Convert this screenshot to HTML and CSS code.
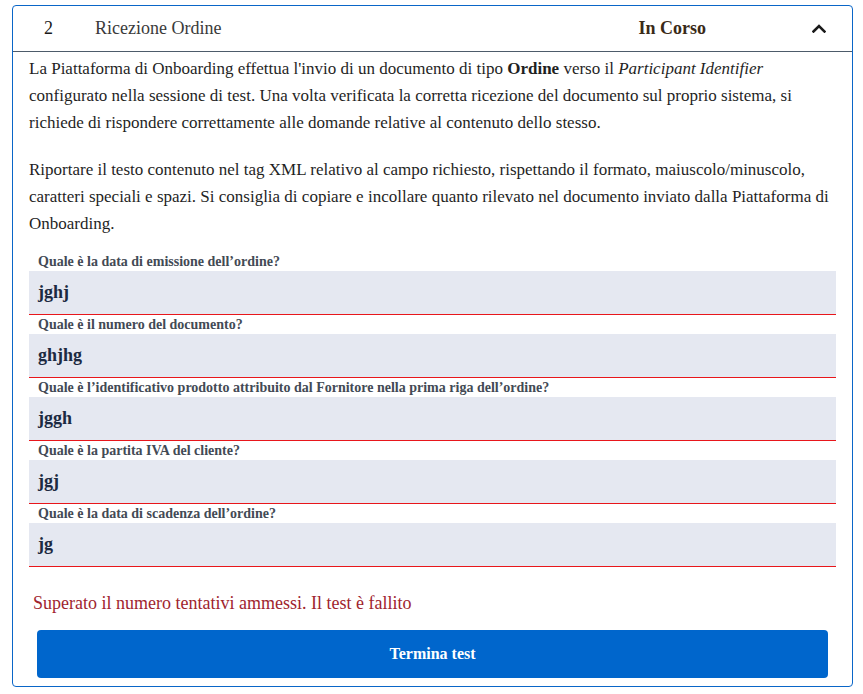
FILE: index.html
```html
<!DOCTYPE html>
<html lang="it">
<head>
<meta charset="utf-8">
<link rel="stylesheet" href="styles.css">
</head>
<body>
<div class="page">
  <section class="card">
    <header class="card-head">
      <span class="step">2</span>
      <span class="title">Ricezione Ordine</span>
      <span class="status">In Corso</span>
      <span class="chevron">
        <svg width="14" height="9" viewBox="0 0 14 9"><path d="M1.5 7.5 L7 2 L12.5 7.5" fill="none" stroke="#1a1a1a" stroke-width="2.6" stroke-linecap="square"/></svg>
      </span>
    </header>
    <div class="card-body">
      <p class="text">La Piattaforma di Onboarding effettua l'invio di un documento di tipo <b>Ordine</b> verso il <i>Participant Identifier</i> configurato nella sessione di test. Una volta verificata la corretta ricezione del documento sul proprio sistema, si richiede di rispondere correttamente alle domande relative al contenuto dello stesso.</p>
      <p class="text text-last">Riportare il testo contenuto nel tag XML relativo al campo richiesto, rispettando il formato, maiuscolo/minuscolo, caratteri speciali e spazi. Si consiglia di copiare e incollare quanto rilevato nel documento inviato dalla Piattaforma di Onboarding.</p>
      <div class="form">
        <div class="field">
          <label class="label">Quale è la data di emissione dell’ordine?</label>
          <div class="input">jghj</div>
        </div>
        <div class="field">
          <label class="label">Quale è il numero del documento?</label>
          <div class="input">ghjhg</div>
        </div>
        <div class="field">
          <label class="label">Quale è l’identificativo prodotto attribuito dal Fornitore nella prima riga dell’ordine?</label>
          <div class="input">jggh</div>
        </div>
        <div class="field">
          <label class="label">Quale è la partita IVA del cliente?</label>
          <div class="input">jgj</div>
        </div>
        <div class="field">
          <label class="label">Quale è la data di scadenza dell’ordine?</label>
          <div class="input">jg</div>
        </div>
      </div>
      <p class="error">Superato il numero tentativi ammessi. Il test è fallito</p>
      <button class="btn">Termina test</button>
    </div>
  </section>
</div>
</body>
</html>
```
FILE: styles.css
```css
html, body {
  margin: 0;
  padding: 0;
  background: #ffffff;
}
body {
  font-family: "Liberation Serif", "Times New Roman", serif;
  color: #1f1f1f;
}
.page {
  padding: 5px 10px 0 12px;
}
.card {
  width: 839px;
  border: 1px solid #0a66c8;
  border-radius: 4px;
  box-sizing: content-box;
}
.card-head {
  display: flex;
  align-items: center;
  height: 45px;
  border-bottom: 1px solid #4d5b6a;
  font-size: 18px;
}
.step {
  width: 82px;
  padding-left: 31px;
  box-sizing: border-box;
  color: #1a1a1a;
}
.title {
  flex: 1;
  color: #3a3a3a;
}
.status {
  font-weight: bold;
  font-size: 18px;
  color: #3a2a18;
  margin-right: 106px;
}
.chevron {
  display: flex;
  margin-right: 26px;
  margin-top: -1px;
}
.card-body {
  padding: 3px 16px 8px 16px;
}
.text {
  margin: 0 0 20px 0;
  font-size: 17px;
  line-height: 27px;
  color: #1f1f1f;
}
.text-last {
  margin-bottom: 0;
}
.form {
  margin-top: 15px;
}
.label {
  display: block;
  font-size: 14px;
  font-weight: bold;
  line-height: 19px;
  padding-left: 9px;
  color: #434a55;
}
.input {
  height: 43px;
  line-height: 43px;
  background: #e5e8f1;
  border-bottom: 1px solid #e8161b;
  padding-left: 9px;
  font-size: 18px;
  font-weight: bold;
  color: #1c2a42;
}
.error {
  margin: 26px 0 0 4px;
  font-size: 18px;
  line-height: 20px;
  color: #a0242e;
}
.btn {
  display: block;
  margin: 17px 8px 0 8px;
  width: calc(100% - 16px);
  height: 48px;
  border: none;
  border-radius: 4px;
  background: #0066cc;
  color: #ffffff;
  font-family: "Liberation Serif", "Times New Roman", serif;
  font-size: 16px;
  font-weight: bold;
}
```
